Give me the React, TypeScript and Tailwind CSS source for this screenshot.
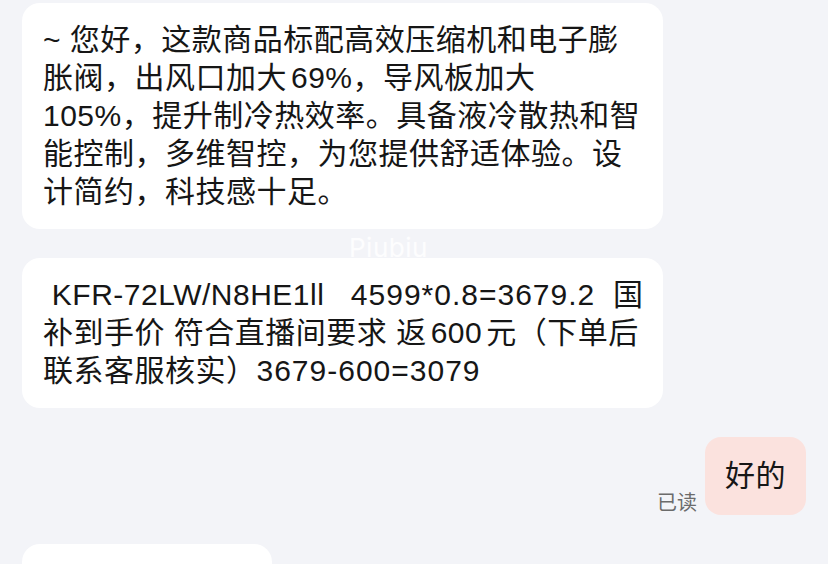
import React from "react";

const font = { fontFamily: '"Liberation Sans", "Noto Sans CJK SC", sans-serif' };

function Line({ children }: { children: React.ReactNode }) {
  return <div className="whitespace-pre h-[38px] leading-[38px]">{children}</div>;
}

function L({ children }: { children: React.ReactNode }) {
  return <span className="mx-[4px]">{children}</span>;
}

export default function App() {
  return (
    <div
      className="relative w-[828px] h-[564px] overflow-hidden bg-[#f3f4f8] text-[#161616] text-[30px] tracking-[0.5px]"
      style={font}
    >
      <div className="flex flex-col pt-[3px] pl-[22px] pr-[22px] gap-[29px]">
        <div className="w-[641px] bg-white rounded-[18px] pl-[21px] py-[18px]">
          <Line>~ 您好，这款商品标配高效压缩机和电子膨</Line>
          <Line>
            胀阀，出风口加大<span className="ml-[4px]">69%</span>，导风板加大
          </Line>
          <Line>105%，提升制冷热效率。具备液冷散热和智</Line>
          <Line>能控制，多维智控，为您提供舒适体验。设</Line>
          <Line>计简约，科技感十足。</Line>
        </div>
        <div className="w-[641px] bg-white rounded-[18px] pl-[21px] py-[18px]">
          <Line>
            {" KFR-72LW/N8HE1ll   "}
            <span className="tracking-[1px]">4599*0.8=3679.2</span>
            {"  国"}
          </Line>
          <Line>
            补到手价 符合直播间要求 返<L>600</L>元（下单后
          </Line>
          <Line>
            联系客服核实）<span className="tracking-[1px]">3679-600=3079</span>
          </Line>
        </div>
        <div className="flex justify-end items-end gap-[8px]">
          <span className="text-[20px] tracking-normal text-[#6b6b6b] leading-[24px]">已读</span>
          <div className="bg-[#fbe2de] rounded-[16px] px-[20px] py-[20px]">
            <Line>好的</Line>
          </div>
        </div>
        <div className="w-[250px] h-[60px] bg-white rounded-[18px]"></div>
      </div>
      <div className="absolute left-[349px] top-[233px] text-[26px] tracking-[0.5px] text-white/80 leading-[30px]" style={{ fontFamily: '"Inter", sans-serif' }}>
        Piubiu
      </div>
    </div>
  );
}
